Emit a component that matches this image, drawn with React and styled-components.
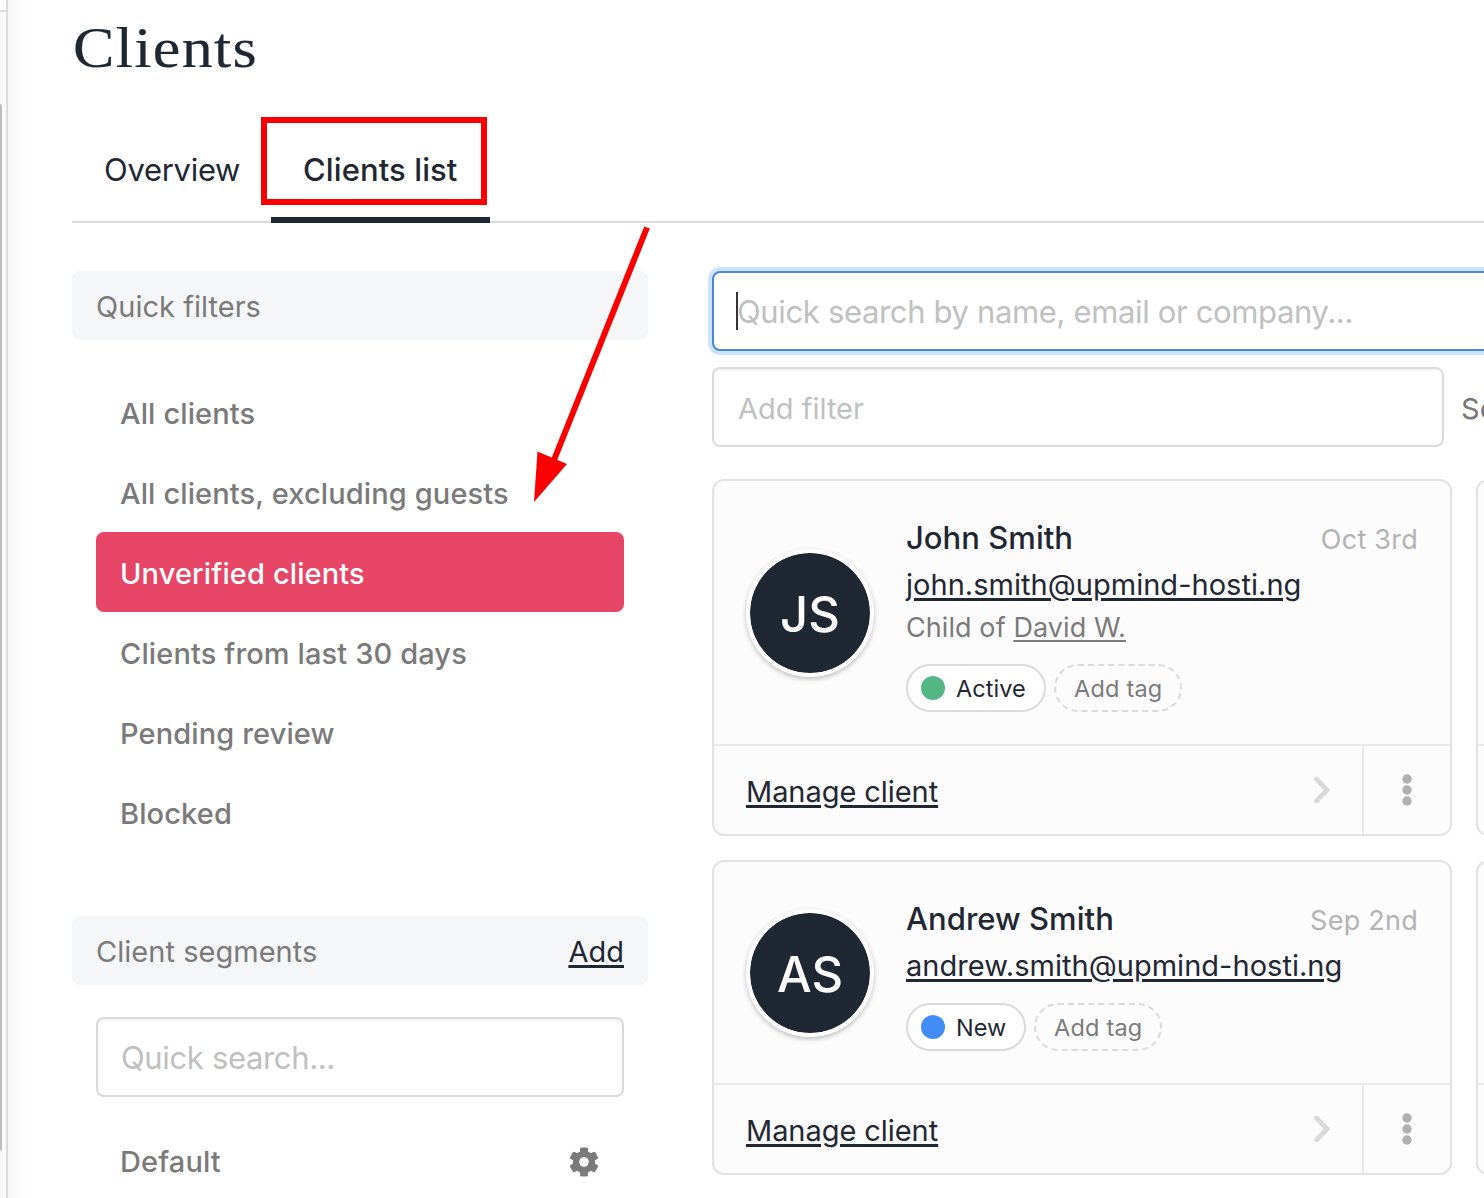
import React from 'react'
import styled, { createGlobalStyle, css } from 'styled-components'

const GlobalStyle = createGlobalStyle`
  * {
    box-sizing: border-box;
  }

  body {
    margin: 0;
    background: #fff;
    color: #1f2733;
    font-family: Inter, 'Liberation Sans', sans-serif;
    font-size: 29px;
    letter-spacing: 0.03px;
    overflow: hidden;
  }
`

const Page = styled.div`
  position: relative;
  display: flex;
  width: 1484px;
  height: 1198px;
  overflow: hidden;
`

const Rail = styled.div`
  flex: none;
  width: 8px;
  background: #fafafa;
  border-right: 2px solid #dcdcdc;
`

const RailTop = styled.div`
  height: 12px;
  background: #fff;
  border-bottom: 2px solid #dcdcdc;
`

const RailThumb = styled.div`
  width: 2px;
  height: 1047px;
  margin-top: 92px;
  background: #bdbdbd;
  border-radius: 0 2px 2px 0;
`

const Content = styled.main`
  flex: none;
  width: 1476px;
  padding-left: 64px;
  background: linear-gradient(to right, #f7f7f7, #fff 20px);
`

const Title = styled.h1`
  height: 117px;
  margin: 0;
  padding: 16px 0 0 1px;
  font-family: 'Liberation Serif', serif;
  font-size: 58px;
  font-weight: 400;
  line-height: 64px;
  letter-spacing: 1.2px;
  transform: scaleX(1.07);
  transform-origin: left;
  -webkit-text-stroke: 0.2px #1f2733;
`

const Tabs = styled.nav`
  display: flex;
  height: 106px;
  border-bottom: 2px solid #dadada;
`

const Tab = styled.a`
  display: flex;
  align-items: center;
  flex: none;
  width: ${(props) => props.$width}px;
  height: 106px;
  padding: 4px 0 0 32px;
  font-size: 31px;
  font-weight: ${(props) => (props.$active ? 500 : 400)};
  letter-spacing: ${(props) => (props.$active ? 0.1 : -0.3)}px;
  border-bottom: 6px solid ${(props) => (props.$active ? '#1f2733' : 'transparent')};
`

const Columns = styled.div`
  display: flex;
  gap: 64px;
  padding-top: 48px;
`

const Sidebar = styled.aside`
  flex: none;
  width: 576px;
`

const SectionHeader = styled.div`
  display: flex;
  align-items: center;
  justify-content: space-between;
  height: 69px;
  padding: 2px 24px 0;
  background: #f5f6f8;
  border-radius: 8px;
  color: #7a7a7a;
`

const Link = styled.a`
  color: ${(props) => (props.$muted ? '#7a7a7a' : '#1f2733')};
  text-decoration: underline;
  text-decoration-thickness: ${(props) => (props.$muted ? 2 : 3)}px;
  text-underline-offset: 3px;
`

const FilterList = styled.div`
  padding: 32px 24px 64px;
`

const FilterItem = styled.div`
  display: flex;
  align-items: center;
  justify-content: space-between;
  height: 80px;
  padding: 3px 24px 0;
  border-radius: 8px;
  font-weight: 500;
  letter-spacing: 0.12px;
  color: ${(props) => (props.$active ? '#fff' : '#7a7a7a')};
  background: ${(props) => (props.$active ? '#e64565' : 'transparent')};
`

const SegmentList = styled.div`
  display: flex;
  flex-direction: column;
  gap: 23px;
  padding: 32px 24px 0;
`

const Field = styled.div`
  display: flex;
  align-items: center;
  flex: none;
  width: ${(props) => props.$width}px;
  height: 80px;
  padding: 0 0 0 23px;
  background: #fff;
  border: 2px solid #dadada;
  border-radius: 8px;
  box-shadow: inset 0 2px 3px rgba(0, 0, 0, 0.05);
  color: #c0c0c0;
  font-size: 31px;
  letter-spacing: -0.35px;
  ${(props) =>
    props.$focused &&
    css`
      border-color: #4a86dc;
      box-shadow: 0 0 0 4px #cde2fb;
    `}
`

const FilterField = styled(Field)`
  padding: 3px 0 0 24px;
  font-size: 29px;
  letter-spacing: 0;
`

const Caret = styled.span`
  width: 2px;
  height: 38px;
  margin: 0 -1px;
  background: #333;
`

const Main = styled.section`
  flex: none;
  width: 1504px;
`

const FilterBar = styled.div`
  display: flex;
  align-items: center;
  gap: 16px;
  margin: 16px 0 32px;
  color: #777;
`

const SortLabel = styled.span`
  padding: 2px 0 0 1px;
  white-space: nowrap;
`

const Cards = styled.div`
  display: grid;
  grid-template-columns: 740px 740px;
  gap: 24px;
`

const Card = styled.article`
  background: #fcfcfc;
  border: 2px solid #e2e2e2;
  border-radius: 12px;
`

const CardBody = styled.div`
  display: flex;
  align-items: center;
  padding: 32px;
`

const Avatar = styled.div`
  display: flex;
  align-items: center;
  justify-content: center;
  flex: none;
  width: 128px;
  height: 128px;
  margin-right: 32px;
  padding-top: 3px;
  border: 4px solid #fff;
  border-radius: 50%;
  background: #1f2733;
  background-clip: padding-box;
  box-shadow: 0 2px 5px rgba(0, 0, 0, 0.25);
  color: #fff;
  font-size: 49px;
  font-weight: 500;
`

const Info = styled.div`
  flex: 1;
`

const NameRow = styled.div`
  display: flex;
  justify-content: space-between;
  height: 50px;
  line-height: 50px;
`

const Name = styled.span`
  font-weight: 500;
  font-size: 31px;
`

const DateText = styled.span`
  padding-top: 2px;
  color: #b3b3b3;
  font-size: 27px;
  letter-spacing: 0.25px;
`

const Email = styled.div`
  height: 44px;
  line-height: 44px;
`

const Parent = styled.div`
  height: 42px;
  color: #7a7a7a;
  font-size: 27px;
  letter-spacing: 0.08px;
  line-height: 42px;
`

const Tags = styled.div`
  display: flex;
  gap: 8px;
  margin-top: 15px;
`

const Tag = styled.span`
  display: flex;
  align-items: center;
  width: ${(props) => props.$width}px;
  height: 48px;
  padding: 1px 0 0 13px;
  background: #fff;
  border: 2px solid #dadada;
  border-radius: 24px;
  font-size: 23.5px;
`

const AddTag = styled(Tag)`
  padding-left: 18px;
  background: transparent;
  border-style: dashed;
  color: #7a7a7a;
  letter-spacing: 0.2px;
`

const Dot = styled.span`
  width: 24px;
  height: 24px;
  margin: -1px 11px 0 0;
  border-radius: 50%;
  background: ${(props) => props.$color};
`

const CardFooter = styled.div`
  display: flex;
  height: 90px;
  border-top: 2px solid #e9e9e9;
`

const Manage = styled.div`
  display: flex;
  align-items: center;
  justify-content: space-between;
  flex: 1;
  padding: 0 31px 0 32px;
  border-right: 2px solid #e9e9e9;
`

const ManageLink = styled(Link)`
  padding-top: 3px;
  letter-spacing: -0.06px;
`

const More = styled.div`
  display: flex;
  align-items: center;
  justify-content: center;
  width: 86px;
`

const Highlight = styled.div`
  position: absolute;
  left: 261px;
  top: 117px;
  width: 226px;
  height: 88px;
  border: 6px solid #fa0000;
`

const Arrow = styled.svg`
  position: absolute;
  left: 530px;
  top: 222px;
`

const filters = [
  'All clients',
  'All clients, excluding guests',
  'Unverified clients',
  'Clients from last 30 days',
  'Pending review',
  'Blocked',
]

const clients = [
  {
    initials: 'JS',
    name: 'John Smith',
    email: 'john.smith@upmind-hosti.ng',
    date: 'Oct 3rd',
    parent: 'David W.',
    status: 'Active',
    color: '#55b685',
    tagWidth: 140,
  },
  { empty: true, bodyHeight: 263 },
  {
    initials: 'AS',
    name: 'Andrew Smith',
    email: 'andrew.smith@upmind-hosti.ng',
    date: 'Sep 2nd',
    status: 'New',
    color: '#428df5',
    tagWidth: 120,
  },
  { empty: true, bodyHeight: 221 },
]

const EmptyBody = styled.div`
  height: ${(props) => props.$height}px;
`

const GearIcon = () => (
  <svg width='32' height='32' viewBox='0 0 32 32'>
    <g fill='#7a7a7a'>
      {[0, 60, 120].map((angle) => (
        <rect
          key={angle}
          x='12'
          y='1.5'
          width='8'
          height='29'
          rx='1.5'
          transform={`rotate(${angle} 16 16)`}
        />
      ))}
      <circle cx='16' cy='16' r='11' />
    </g>
    <circle cx='16' cy='16' r='4.8' fill='#fff' />
  </svg>
)

const ChevronIcon = () => (
  <svg width='18' height='28' viewBox='0 0 18 28'>
    <path
      d='M3.5 3.2 L14 14 L3.5 24.8'
      fill='none'
      stroke='#d9d9d9'
      strokeWidth='4.8'
      strokeLinecap='round'
    />
  </svg>
)

const DotsIcon = () => (
  <svg width='10' height='32' viewBox='0 0 10 32'>
    <g fill='#b0b0b0'>
      <circle cx='5' cy='5' r='4.7' />
      <circle cx='5' cy='16' r='4.7' />
      <circle cx='5' cy='27' r='4.7' />
    </g>
  </svg>
)

const ClientCard = ({ client }) => {
  if (client.empty) {
    return (
      <Card>
        <EmptyBody $height={client.bodyHeight} />
        <CardFooter />
      </Card>
    )
  }

  return (
    <Card>
      <CardBody>
        <Avatar>{client.initials}</Avatar>
        <Info>
          <NameRow>
            <Name>{client.name}</Name>
            <DateText>{client.date}</DateText>
          </NameRow>
          <Email>
            <Link>{client.email}</Link>
          </Email>
          {client.parent ? (
            <Parent>
              Child of <Link $muted>{client.parent}</Link>
            </Parent>
          ) : null}
          <Tags>
            <Tag $width={client.tagWidth}>
              <Dot $color={client.color} />
              {client.status}
            </Tag>
            <AddTag $width={128}>Add tag</AddTag>
          </Tags>
        </Info>
      </CardBody>
      <CardFooter>
        <Manage>
          <ManageLink>Manage client</ManageLink>
          <ChevronIcon />
        </Manage>
        <More>
          <DotsIcon />
        </More>
      </CardFooter>
    </Card>
  )
}

const App = () => (
  <>
    <GlobalStyle />
    <Page>
      <Rail>
        <RailTop />
        <RailThumb />
      </Rail>
      <Content>
        <Title>Clients</Title>
        <Tabs>
          <Tab $width={199}>Overview</Tab>
          <Tab $width={219} $active>
            Clients list
          </Tab>
        </Tabs>
        <Columns>
          <Sidebar>
            <SectionHeader>Quick filters</SectionHeader>
            <FilterList>
              {filters.map((filter) => (
                <FilterItem key={filter} $active={filter === 'Unverified clients'}>
                  {filter}
                </FilterItem>
              ))}
            </FilterList>
            <SectionHeader>
              Client segments
              <Link>Add</Link>
            </SectionHeader>
            <SegmentList>
              <Field $width={528}>Quick search...</Field>
              <FilterItem>
                Default
                <GearIcon />
              </FilterItem>
            </SegmentList>
          </Sidebar>
          <Main>
            <Field $width={1504} $focused>
              <Caret />
              Quick search by name, email or company...
            </Field>
            <FilterBar>
              <FilterField $width={732}>Add filter</FilterField>
              <SortLabel>Sort by</SortLabel>
            </FilterBar>
            <Cards>
              {clients.map((client, idx) => (
                <ClientCard key={idx} client={client} />
              ))}
            </Cards>
          </Main>
        </Columns>
      </Content>
      <Highlight />
      <Arrow width='124' height='284' viewBox='0 0 124 284'>
        <path d='M117 5.5 L24 238' stroke='#fa0000' strokeWidth='6' />
        <path d='M4 280 L7.5 229.5 L37 242 Z' fill='#fa0000' />
      </Arrow>
    </Page>
  </>
)

export default App
